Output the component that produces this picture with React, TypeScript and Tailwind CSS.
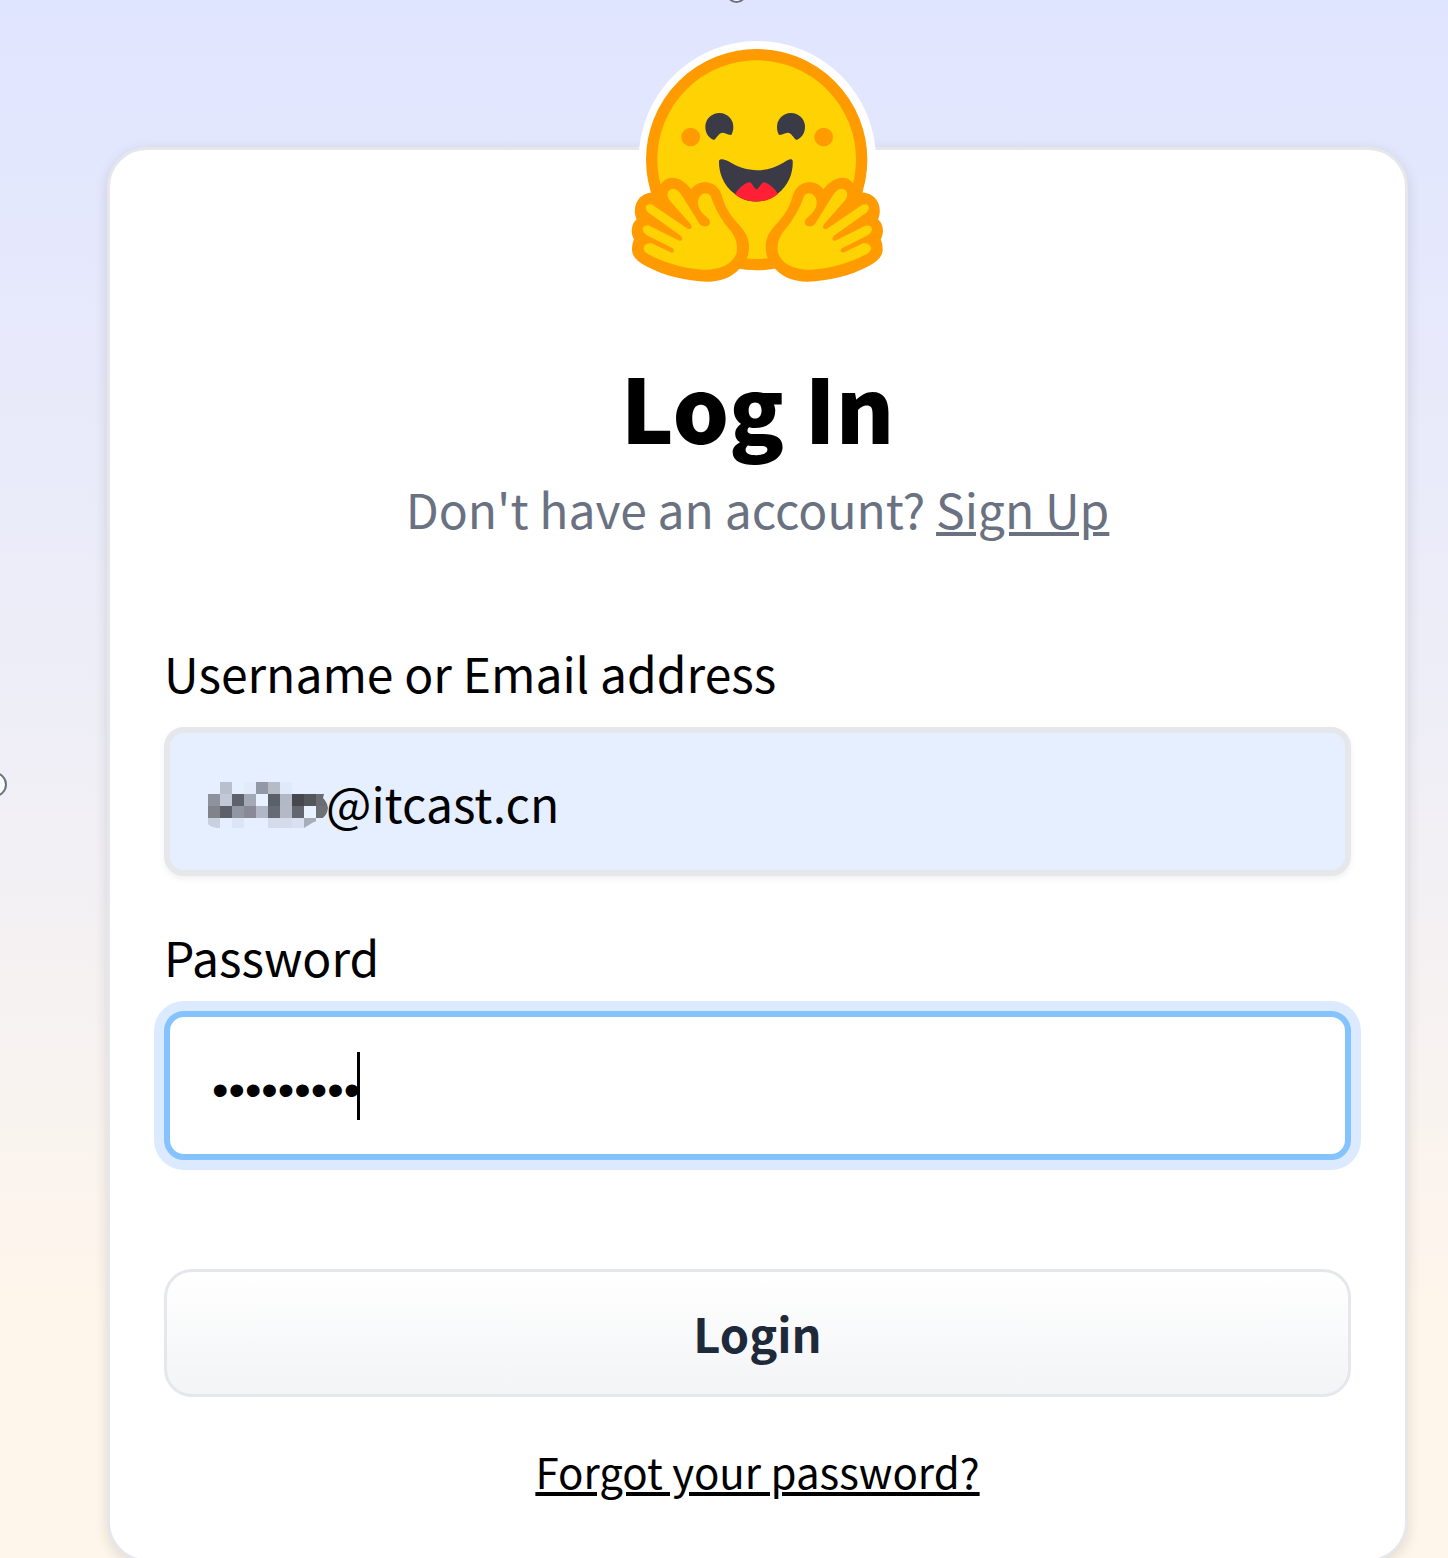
function Hand() {
  return (
    <>
      <path
        fill="#ff9a00"
        d="M112 487C120 460 134 443 157 443C180 444 198 458 214 478C224 464 238 457 256 457C282 458 297 474 305 495C314 530 330 556 354 581C376 604 388 626 387 652C386 680 378 700 358 717C334 742 304 755 262 755C200 753 130 736 82 710C52 695 37 680 36 660C36 646 38 638 42 628C36 618 34 606 36 594C38 582 43 574 50 568C44 555 43 540 47 525C55 500 78 484 112 487Z"
      />
      <path
        fill="#ffd204"
        d="M272 498C282 530 305 570 328 598C345 618 355 640 350 668C340 700 305 720 250 719C190 716 120 695 78 668C62 655 75 637 95 640L152 667C164 670 164 660 158 655L85 618C62 608 62 583 88 587L178 632C188 633 189 624 182 617L92 553C68 537 76 518 97 524L203 596C214 600 218 592 212 583L148 510C138 495 142 478 158 476C172 476 180 488 188 500L234 574C240 587 249 590 258 589C270 587 273 575 266 567C245 548 233 537 234 515C236 490 262 482 272 498Z"
      />
    </>
  );
}

function Eye() {
  return (
    <path
      fill="#3b3b47"
      d="M282 330C262 322 256 305 256 290A42 42 0 1 1 340 292C340 300 338 308 334 315C325 315 317 309 308 308C297 308 292 322 282 330Z"
    />
  );
}

function HuggingFaceLogo() {
  return (
    <svg viewBox="-6 0 840 810" className="h-[270px] w-[280px]" role="img" aria-label="Hugging Face">
      <circle cx="412" cy="389" r="356" fill="#fff" />
      <circle cx="410" cy="389" r="315" fill="#ffd204" stroke="#ff9a00" strokeWidth="34" />
      <circle cx="212" cy="321" r="28" fill="#ff9a00" />
      <circle cx="611" cy="321" r="28" fill="#ff9a00" />
      <Eye />
      <g transform="translate(811 0) scale(-1 1)">
        <Eye />
      </g>
      <path
        fill="#3b3b47"
        d="M297 392C302 384 315 388 325 394C380 428 436 430 490 398C505 388 515 384 518 392C520 425 508 465 472 492C435 522 380 522 345 492C308 465 296 425 297 392Z"
      />
      <path
        fill="#ff2036"
        d="M345 493C355 475 372 460 388 456C397 458 402 477 410 478C418 475 424 458 432 457C450 462 465 478 474 492C440 522 380 522 345 493Z"
      />
      <Hand />
      <g transform="translate(824 0) scale(-1 1)">
        <Hand />
      </g>
    </svg>
  );
}

const mosaic: (string | null)[][] = [
  [null, "#b9bfcd", null, "#e2ebfa", "#9298a4", "#b5bbc7", "#e0e9f8", null, null, null],
  ["#8d929c", "#c3c8d8", "#5f626b", "#a4a9b6", "#e8f1ff", "#5b5f68", "#b3b8c6", "#45474c", "#53565b", "#686c73"],
  ["#80838c", "#5d6069", "#9096a2", "#888b96", "#b1b7c6", "#666a74", "#b5b9c6", "#62666f", "#e8f2ff", "#6c7077"],
  ["#c9d0de", null, "#dce5f4", null, null, "#d4dcec", "#d4dcec", "#d9e1f1", "#a8adba", null],
];

function Mosaic() {
  return (
    <svg
      viewBox="0 0 120 46"
      className="pointer-events-none absolute left-[44px] top-[55px] h-[46px] w-[120px]"
      aria-hidden="true"
    >
      <defs>
        <clipPath id="smudge">
          <path d="M0 0H104V12H116L115 16Q119 20 120 26Q119 34 113 37L104 41L96 46H12Q3 46 0 42Z" />
        </clipPath>
      </defs>
      <g clipPath="url(#smudge)" shapeRendering="crispEdges">
        {mosaic.map((row, r) =>
          row.map((c, i) => c && <rect key={`${r}-${i}`} x={i * 12} y={r * 12} width="12" height="12" fill={c} />),
        )}
      </g>
    </svg>
  );
}

export default function App() {
  return (
    <div className="relative h-screen overflow-hidden bg-linear-to-b from-[#e0e5ff] via-[#f0eff6] via-50% to-[#fff6eb] to-85% font-['Noto_Sans_CJK_SC',sans-serif] text-black">
      <span className="absolute -left-[9px] -top-[9px] size-[11px] rounded-full border border-gray-500 bg-white" />
      <span className="absolute -top-[18px] left-[726px] size-[21px] rounded-full border-2 border-gray-500 bg-white" />
      <span className="absolute -left-[18px] top-[772px] size-[25px] rounded-full border-2 border-gray-500 bg-white" />

      <main className="relative mt-[147px] mr-10 ml-[107px] rounded-[40px] border-3 border-gray-200 bg-white px-[54px] pb-[52px] shadow-[0_4px_14px_rgba(0,0,0,0.12)]">
        <div className="-mt-[120px] flex justify-center">
          <HuggingFaceLogo />
        </div>

        <header className="mt-[50px] text-center">
          <h1 className="text-[89px] leading-[112px] font-black">Log In</h1>
          <p className="mt-[10px] text-[48px] leading-[72px] text-gray-500">
            Don't have an account?{" "}
            <a href="#signup" className="underline">
              Sign Up
            </a>
          </p>
        </header>

        <form onSubmit={(e) => e.preventDefault()}>
          <label htmlFor="username" className="mt-[92px] block text-[48px] leading-[72px]">
            Username or Email address
          </label>
          <div className="relative mt-[19px]">
            <input
              id="username"
              type="text"
              defaultValue="@itcast.cn"
              className="block h-[149px] w-full rounded-[20px] border-[6px] border-gray-200 bg-[#e6efff] pl-[156px] text-[48px] shadow-[0_3px_6px_rgba(0,0,0,0.06)] outline-none"
            />
            <Mosaic />
          </div>

          <label htmlFor="password" className="mt-[44px] block text-[48px] leading-[72px]">
            Password
          </label>
          <div className="relative mt-[19px]">
            <input
              id="password"
              type="password"
              defaultValue="password1"
              className="block h-[149px] w-full rounded-[20px] border-[6px] border-[#85c3ff] bg-white pt-2 pl-[42px] font-['Liberation_Sans',sans-serif] text-[47px] ring-10 ring-blue-100 outline-none"
            />
            <span className="absolute top-[41px] left-[193px] h-[68px] w-[3px] bg-black" />
          </div>

          <button
            type="submit"
            className="mt-[109px] block h-[128px] w-full rounded-[28px] border-3 border-gray-200 bg-linear-to-b from-white to-gray-100 text-[47px] font-bold text-gray-800"
          >
            Login
          </button>
        </form>

        <p className="mt-[38px] text-center text-[42px] leading-[72px]">
          <a href="#forgot" className="underline">
            Forgot your password?
          </a>
        </p>
      </main>
    </div>
  );
}
